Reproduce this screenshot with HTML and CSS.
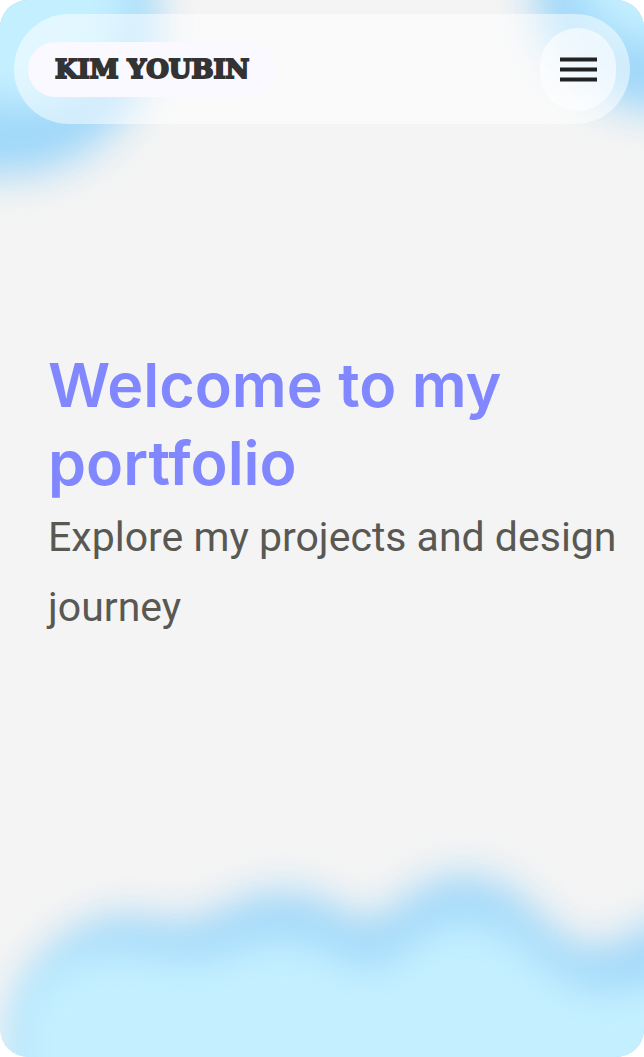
FILE: index.html
```html
<!DOCTYPE html>
<html lang="en">
<head>
<meta charset="utf-8">
<meta name="viewport" content="width=device-width, initial-scale=1">
<title>Kim Youbin</title>
<link rel="stylesheet" href="styles.css">
</head>
<body>
<div class="page">
  <svg class="cloud cloud-left" viewBox="0 0 260 260" aria-hidden="true">
    <circle class="cloud-edge" cx="4" cy="24" r="152"/>
    <circle class="cloud-core" cx="20" cy="-4" r="112"/>
  </svg>
  <svg class="cloud cloud-right" viewBox="0 0 200 200" aria-hidden="true">
    <circle class="cloud-edge" cx="216" cy="-14" r="126"/>
    <circle class="cloud-core" cx="208" cy="-32" r="76"/>
  </svg>
  <svg class="cloud cloud-bottom" viewBox="0 0 644 257" preserveAspectRatio="none" aria-hidden="true">
    <path class="cloud-edge" d="M14 330V230C24 166 70 116 130 116C155 116 165 126 190 122C225 114 240 92 285 92C330 92 345 122 370 120C400 116 410 76 465 76C530 76 545 148 592 148C620 148 640 122 700 110V330Z"/>
    <path class="cloud-core" d="M14 330V215C30 166 70 146 130 148C170 150 185 162 205 156C235 146 250 136 285 136C330 136 345 166 375 164C405 156 420 118 465 118C525 118 545 182 600 188C640 188 660 174 700 170V330Z"/>
  </svg>

  <header class="topbar">
    <a class="logo" href="#">KIM YOUBIN</a>
    <button class="menu" type="button" aria-label="Open menu">
      <svg class="menu-icon" viewBox="0 0 37 25" aria-hidden="true">
        <path d="M0 2.5H37M0 12.5H37M0 22.5H37"/>
      </svg>
    </button>
  </header>

  <main class="hero">
    <h1 class="title">Welcome to my portfolio</h1>
    <p class="lead">Explore my projects and design journey</p>
  </main>
</div>
</body>
</html>
```
FILE: styles.css
```css
* {
  box-sizing: border-box;
}

body {
  margin: 0;
  background: #fff;
  font-family: Inter, "Liberation Sans", sans-serif;
}

.page {
  position: relative;
  min-height: 100vh;
  padding: 14px;
  overflow: hidden;
  border-radius: 28px;
  background: #f4f4f4;
}

.cloud {
  position: absolute;
  overflow: visible;
}

.cloud-left {
  top: 0;
  left: 0;
  width: 260px;
}

.cloud-right {
  top: 0;
  right: 0;
  width: 200px;
}

.cloud-bottom {
  bottom: 0;
  left: 0;
  width: 100%;
  height: 257px;
}

.cloud-edge {
  fill: #9fd7f9;
  filter: blur(20px);
}

.cloud-core {
  fill: #c4efff;
  filter: blur(20px);
}

.topbar {
  position: relative;
  display: flex;
  align-items: center;
  justify-content: space-between;
  height: 110px;
  padding: 0 14px;
  border-radius: 55px;
  background: rgba(255, 255, 255, 0.5);
}

.logo {
  padding: 0 27px;
  border-radius: 28px;
  background: #faf9ff;
  color: #333;
  font: 700 26px/55px "DejaVu Serif", serif;
  -webkit-text-stroke: 2px #333;
  text-decoration: none;
  white-space: nowrap;
}

.menu {
  display: flex;
  align-items: center;
  justify-content: center;
  width: 76px;
  height: 83px;
  padding: 0;
  border: 0;
  border-radius: 38px;
  background: rgba(255, 255, 255, 0.6);
  cursor: pointer;
}

.menu-icon {
  width: 37px;
  height: 25px;
  fill: none;
  stroke: #222;
  stroke-width: 4;
}

.hero {
  position: relative;
  padding: 222px 0 0 34px;
}

.title {
  margin: 0;
  color: #8087ff;
  font-size: 61px;
  font-weight: 600;
  line-height: 78px;
}

.lead {
  margin: 0;
  color: #595853;
  font-family: Roboto, Inter, sans-serif;
  font-size: 41px;
  line-height: 70px;
}
```
